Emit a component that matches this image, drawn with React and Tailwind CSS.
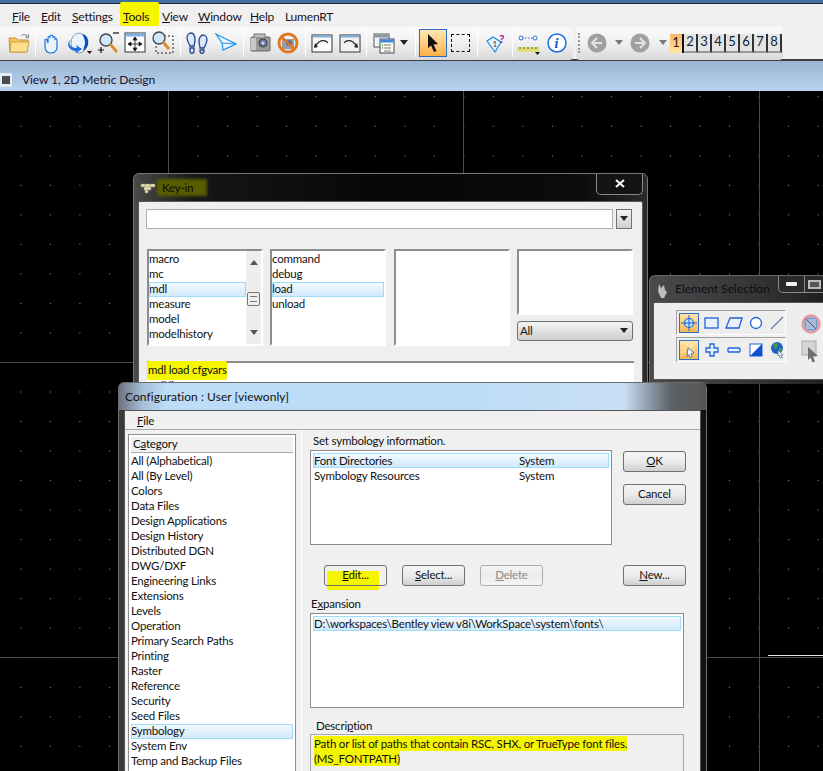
const menus = [
  ['F', 'ile', 'w-[29px]'],
  ['E', 'dit', 'w-[31px]'],
  ['S', 'ettings', 'w-[51px]'],
  ['T', 'ools', 'w-[39px]'],
  ['V', 'iew', 'w-[36px]'],
  ['W', 'indow', 'w-[52px]'],
  ['H', 'elp', 'w-[35px]'],
  ['', 'LumenRT', 'w-[60px]'],
]

const categories = [
  'All (Alphabetical)', 'All (By Level)', 'Colors', 'Data Files', 'Design Applications', 'Design History',
  'Distributed DGN', 'DWG/DXF', 'Engineering Links', 'Extensions', 'Levels', 'Operation', 'Primary Search Paths',
  'Printing', 'Raster', 'Reference', 'Security', 'Seed Files', 'Symbology', 'System Env', 'Temp and Backup Files',
]

function Sep({ className }) {
  return <span className={`h-[27px] w-px shrink-0 border-r border-[#fff] bg-[#a8a8a8] ${className}`} />
}

function Ico({ w = 22, h = 24, className = '', children }) {
  return (
    <svg width={w} height={h} viewBox={`0 0 ${w} ${h}`} className={`shrink-0 ${className}`}>
      {children}
    </svg>
  )
}

function Caret({ className, color = '#222' }) {
  return (
    <svg width="8" height="6" viewBox="0 0 8 6" className={`shrink-0 ${className}`}>
      <path d="M0 0h8L4 5z" fill={color} />
    </svg>
  )
}

function Grip({ className }) {
  return <span className={`h-[20px] w-[2px] shrink-0 border-l-2 border-dotted border-[#999] ${className}`} />
}

function ListRow({ children, active }) {
  return (
    <div className={`h-[15px] truncate leading-[14px] ${active ? 'outline outline-[#9fdcf8] -outline-offset-1 bg-linear-to-b from-[#f4faff] to-[#cfe8fb]' : ''}`}>
      {children}
    </div>
  )
}

function Btn({ children, className = '', disabled }) {
  return (
    <div className={`flex h-[21px] w-[63px] shrink-0 items-center justify-center rounded-[3px] border bg-linear-to-b from-[#f4f4f4] via-[#ececec] to-[#cfcfcf] pb-px ${disabled ? 'border-[#adadad] text-[#8a8a8a] from-[#f4f4f4] to-[#f4f4f4]' : 'border-[#707070] text-[#111]'} ${className}`}>
      <span className="relative">{children}</span>
    </div>
  )
}

function Bars() {
  return (
    <div className="absolute inset-x-0 top-[91px] bottom-0 bg-black">
      <svg width="823" height="680" className="absolute inset-0">
        <defs>
          <pattern id="dots" x="20.35" y="5.2" width="29.53" height="29.53" patternUnits="userSpaceOnUse">
            <rect width="1" height="1" fill="#9a9a9a" />
          </pattern>
        </defs>
        <rect width="823" height="680" fill="url(#dots)" />
        <path d="M168.5 0V680M463.5 0V680M759.5 0V680M0 271.5H823M0 566.5H823" stroke="#4a4a4a" />
        <path d="M768 564.5H823" stroke="#e8e8e8" />
      </svg>
    </div>
  )
}

function KeyIn() {
  return (
    <div className="absolute left-[133px] top-[173px] h-[240px] w-[515px] rounded-t-[6px] border border-[#777] bg-[linear-gradient(90deg,#4a4a4a_0%,#161616_12%,#060606_50%,#0c0c0c_88%,#2c2c2c_100%)]">
      <div className="flex h-[27px] items-center">
        <Ico w={16} h={12} className="ml-[6px]">
          <path d="M1 2h14v3H11v3H8v3H5V8H4V5H1z" fill="#e9e3b8" stroke="#8b8660" strokeWidth=".5" />
          <path d="M1 5h14M5 2v3M10 2v3M5 8h6" stroke="#8b8660" strokeWidth=".6" />
        </Ico>
        <span className="relative ml-[1px] flex h-[17px] w-[50px] items-center pl-[5px] text-[#0b0b0b]">
          <span className="absolute inset-0 bg-[#5a5c00] blur-[1.5px]" />
          <span className="relative">Key-in</span>
        </span>
        <div className="relative ml-auto mr-[4px] mt-[-7px] flex h-[21px] w-[47px] items-center justify-center rounded-b-[5px] border border-t-0 border-[#8a8a8a] bg-[#141414]">
          <svg width="10" height="9" viewBox="0 0 10 9">
            <path d="M1 1l8 7M9 1L1 8" stroke="#f2f2f2" strokeWidth="2.2" />
          </svg>
        </div>
      </div>
      <div className="mx-[4px] h-[300px] rounded-t-[2px] border border-[#5b5b5b] bg-[#efefef] pl-[7px] pt-[7px] text-[#111]">
        <div className="flex items-start">
          <div className="h-[20px] w-[467px] border border-[#abadb3] bg-white" />
          <div className="ml-[3px] flex h-[20px] w-[16px] items-center justify-center border border-[#707070] bg-linear-to-b from-[#f4f4f4] to-[#cfcfcf]">
            <Caret />
          </div>
        </div>
        <div className="mt-[20px] flex pl-px">
          <div className="flex h-[97px] w-[116px] border-2 border-b-[#fff] border-r-[#fff] border-l-[#8d8d8d] border-t-[#8d8d8d] bg-white">
            <div className="min-w-0 flex-1 pt-px">
              <ListRow>macro</ListRow>
              <ListRow>mc</ListRow>
              <ListRow active>mdl</ListRow>
              <ListRow>measure</ListRow>
              <ListRow>model</ListRow>
              <ListRow>modelhistory</ListRow>
            </div>
            <div className="relative w-[15px] bg-[#eeeeee]">
              <Caret color="#555" className="absolute left-[4px] top-[8px] rotate-180" />
              <div className="absolute left-px top-[41px] h-[14px] w-[13px] rounded-[2px] border border-[#777] bg-[#eeeeee] px-[2px] pt-[3px]">
                <div className="h-[6px] border-y border-[#777]" />
              </div>
              <Caret color="#555" className="absolute bottom-[8px] left-[4px]" />
            </div>
          </div>
          <div className="ml-[7px] h-[97px] w-[116px] border-2 border-b-[#fff] border-r-[#fff] border-l-[#8d8d8d] border-t-[#8d8d8d] bg-white pt-px">
            <ListRow>command</ListRow>
            <ListRow>debug</ListRow>
            <ListRow active>load</ListRow>
            <ListRow>unload</ListRow>
          </div>
          <div className="ml-[8px] h-[97px] w-[116px] border-2 border-b-[#fff] border-r-[#fff] border-l-[#8d8d8d] border-t-[#8d8d8d] bg-white" />
          <div className="ml-[7px] w-[116px]">
            <div className="h-[66px] border-2 border-b-[#fff] border-r-[#fff] border-l-[#8d8d8d] border-t-[#8d8d8d] bg-white" />
            <div className="mt-[6px] flex h-[20px] items-center justify-between rounded-[3px] border border-[#707070] bg-linear-to-b from-[#f4f4f4] to-[#cfcfcf] pl-[2px] pr-[4px]">
              All
              <Caret />
            </div>
          </div>
        </div>
        <div className="ml-px mt-[15px] h-[40px] w-[487px] border-t-2 border-t-[#8d8d8d] bg-white">
          <div className="relative h-[15px] w-[80px] whitespace-nowrap pl-px leading-[13px]">
            <span className="absolute inset-x-0 -top-[2px] h-[19px] rounded-[2px] bg-[#f5f500]" />
            <span className="relative">mdl load cfgvars</span>
          </div>
          <div className="relative h-[15px] pl-px leading-[15px]">mdl list</div>
        </div>
      </div>
    </div>
  )
}

function ElementSel() {
  return (
    <div className="absolute left-[649px] top-[275px] h-[109px] w-[190px] rounded-tl-[6px] border-l border-t border-[#666] bg-[linear-gradient(90deg,#4a4a4a_0%,#333_60%,#1a1a1a_100%)]">
      <div className="flex h-[26px] items-start">
        <Ico w={14} h={16} className="ml-[5px] mt-[7px]">
          <path d="M4 1l2 4 3-3 1 5 2 2-3 6H6L3 8z" fill="#bdbdbd" />
        </Ico>
        <span className="ml-[5px] mt-[5px] w-[103px] whitespace-nowrap rounded-[3px] px-[1px] text-[12px] leading-[16px] tracking-[0px] text-[#0c0c0c]">Element Selection</span>
        <div className="ml-[1px] flex h-[17px] w-[27px] items-center justify-center rounded-bl-[5px] border border-t-0 border-[#8a8a8a] bg-[#2a2a2a]">
          <span className="h-[4px] w-[11px] rounded-[1px] bg-[#eee]" />
        </div>
        <div className="flex h-[17px] w-[27px] items-center border-b border-[#8a8a8a] bg-[#2a2a2a] pl-[3px]">
          <span className="h-[9px] w-[13px] border-2 border-[#bbb] bg-[#555]" />
        </div>
      </div>
      <div className="ml-[3px] flex h-[78px] rounded-tl-[2px] border border-[#555] bg-[#eeeeee] pl-[22px] pt-[7px]">
        <div className="flex w-[110px] flex-col gap-[2px]">
          <div className="flex h-[25px] items-center border border-[#a0a0a0] border-r-white border-b-white pl-[2px]">
            <span className="flex h-[20px] w-[20px] items-center justify-center border border-[#2a6fc9] bg-linear-to-b from-[#ffe6a8] to-[#f9b650]">
              <Ico w={16} h={16}>
                <circle cx="8" cy="8" r="4.5" fill="#bfe0ff" stroke="#1c63d8" strokeWidth="1.2" />
                <path d="M8 0v16M0 8h16" stroke="#1c63d8" />
              </Ico>
            </span>
            <Ico w={18} h={16} className="ml-[4px]"><rect x="2" y="3" width="13" height="10" fill="#e8f1fd" stroke="#1c63d8" strokeWidth="1.3" /></Ico>
            <Ico w={18} h={16} className="ml-[4px]"><path d="M5 3h12l-3 10H1z" fill="#e8f1fd" stroke="#1c63d8" strokeWidth="1.3" /></Ico>
            <Ico w={16} h={16} className="ml-[5px]"><circle cx="8" cy="8" r="5.5" fill="#fff" stroke="#1c63d8" strokeWidth="1.3" /></Ico>
            <Ico w={16} h={16} className="ml-[5px]"><path d="M2 14L14 2" stroke="#6b7ea8" strokeWidth="1.2" /></Ico>
          </div>
          <div className="flex h-[25px] items-center border border-[#a0a0a0] border-r-white border-b-white pl-[2px]">
            <span className="flex h-[20px] w-[20px] items-center justify-center border border-[#2a6fc9] bg-linear-to-b from-[#ffe6a8] to-[#f9b650]">
              <Ico w={16} h={16}>
                <path d="M5 1l2 3M10 1L9 4M1 6l3 1M1 11l3-2M12 3l-2 2" stroke="#f7f3d0" strokeWidth="1.2" />
                <path d="M7 6l6 5-3 .5 1 3-2 1-1-3-2 2z" fill="#fff" stroke="#1c63d8" strokeWidth=".8" />
              </Ico>
            </span>
            <Ico w={16} h={16} className="ml-[5px]"><path d="M6 2h4v4h4v4h-4v4H6v-4H2V6h4z" fill="#e8f1fd" stroke="#1c63d8" strokeWidth="1.3" /></Ico>
            <Ico w={16} h={16} className="ml-[6px]"><rect x="2" y="6" width="12" height="4" rx="1" fill="#e8f1fd" stroke="#1c63d8" strokeWidth="1.3" /></Ico>
            <Ico w={16} h={16} className="ml-[6px]">
              <rect x="2" y="2" width="12" height="12" fill="#fff" stroke="#1c63d8" />
              <path d="M14 2v12H2z" fill="#0a4fd0" />
            </Ico>
            <Ico w={16} h={18} className="ml-[5px]">
              <circle cx="8" cy="7" r="6" fill="#1d63c7" />
              <path d="M4 3l4-1 1 3-3 3zM10 7l3 0-1 4-2-1z" fill="#4b9a3a" />
              <path d="M9 9l5 5-2 0 1 3-2 0-1-3-1 1z" fill="#e8eef7" stroke="#3a5f8f" strokeWidth=".6" />
            </Ico>
          </div>
        </div>
        <div className="ml-[15px] mt-[3px] flex flex-col">
          <Ico w={20} h={20} className="mt-[1px]">
            <rect x="4" y="4" width="12" height="12" fill="#a9bad9" stroke="#3b74c9" />
            <path d="M4 4l12 12" stroke="#556" />
            <circle cx="10" cy="10" r="8.5" fill="none" stroke="#e79a97" strokeWidth="2.4" />
          </Ico>
          <Ico w={20} h={24} className="mt-[6px]">
            <rect x="1" y="1" width="14" height="14" fill="#d5d5d5" stroke="#aaa" />
            <path d="M7 7l10 9-5 .5 2 5-2.5 1-2-5L7 20z" fill="#707070" />
          </Ico>
        </div>
      </div>
    </div>
  )
}

function Config() {
  return (
    <div className="absolute left-[118px] top-[382px] h-[420px] w-[589px] rounded-t-[6px] border border-b-0 border-[#6d6d6d] bg-linear-to-r from-[#3a3a3a] via-[#222] to-[#111]">
      <div className="flex h-[27px] items-center rounded-t-[5px] bg-[linear-gradient(90deg,#6a7480_0%,#a5bfd6_4%,#bcdcf8_8%,#bcdcf8_58%,#c8dff4_86%,#5c6268_94%,#555_100%)] pl-[6px] pt-px text-[12px] tracking-[.05px] text-[#111]">
        <span>Configuration : User [viewonly]</span>
      </div>
      <div className="mx-[5px] h-[390px] border border-[#555] bg-[#f0f0f0] text-[#111]">
        <div className="flex h-[19px] items-center border-b border-[#a9a9a9] pl-[12px] pt-[2px]">
          <span><u>F</u>ile</span>
        </div>
        <div className="flex">
          <div className="ml-[3px] mt-[4px] h-[360px] w-[168px] border border-[#8d8d8d] bg-white px-[2px] pt-[2px]">
            <div className="flex h-[16px] items-center border-b border-[#a9a9a9] bg-[#f0f0f0] pb-px pl-[2px]"><span>C<u>a</u>tegory</span></div>
            <div className="pt-px">
              {categories.map((c) => (
                <ListRow key={c} active={c === 'Symbology'}>{c}</ListRow>
              ))}
            </div>
          </div>
          <div className="ml-[5px] h-[370px] w-px border-r border-white bg-[#b5b5b5]" />
          <div className="ml-[8px] flex-1 pt-[3px]">
            <div className="ml-[3px] h-[16px] leading-[16px]">Set symbology information.</div>
            <div className="mt-px flex items-start">
              <div className="h-[95px] w-[302px] border border-[#8d8d8d] bg-white p-[2px]">
                <div className="flex h-[15px] items-center border border-[#9fdcf8] bg-linear-to-b from-[#f4faff] to-[#cfe8fb]">
                  <span className="w-[205px]">Font Directories</span>System
                </div>
                <div className="flex h-[15px] items-center pl-px">
                  <span className="w-[205px]">Symbology Resources</span>System
                </div>
              </div>
              <div className="ml-[11px] mt-px flex flex-col gap-[12px]">
                <Btn><u>O</u>K</Btn>
                <Btn>Cancel</Btn>
              </div>
            </div>
            <div className="mt-[20px] flex">
              <div className="relative ml-[14px]">
                <span className="absolute left-[3px] top-[6px] h-[19px] w-[52px] bg-[#f5f500]" />
                <Btn className="relative from-transparent via-transparent to-transparent"><u>E</u>dit...</Btn>
              </div>
              <Btn className="ml-[15px]"><u>S</u>elect...</Btn>
              <Btn disabled className="ml-[15px]"><u>D</u>elete</Btn>
              <Btn className="ml-[80px]"><u>N</u>ew...</Btn>
            </div>
            <div className="ml-px mt-[9px] h-[18px] leading-[18px]">E<u>x</u>pansion</div>
            <div className="h-[95px] w-[374px] border border-[#8d8d8d] bg-white p-[2px]">
              <div className="flex h-[15px] items-center whitespace-nowrap border border-[#9fdcf8] bg-linear-to-b from-[#f4faff] to-[#cfe8fb]">D:\workspaces\Bentley view v8i\WorkSpace\system\fonts\</div>
            </div>
            <div className="ml-[6px] mt-[9px] h-[17px] leading-[17px]">Descri<u>p</u>tion</div>
            <div className="h-[60px] w-[374px] border border-[#a8a8a8] pl-[3px] pt-px leading-[15px]">
              <span className="bg-[#f5f500] py-px">Path or list of paths that contain RSC, SHX, or TrueType font files.</span>
              <br />
              <span className="bg-[#f5f500] py-px">(MS_FONTPATH)</span>
            </div>
          </div>
        </div>
      </div>
    </div>
  )
}

export default function App() {
  return (
    <div className="relative h-[771px] w-[823px] overflow-hidden bg-black font-['Lato',sans-serif] text-[11.5px] tracking-[-.2px] text-[#111]">
      <Bars />
      <div className="relative">
        <div className="h-[3px] bg-[#3f6f9f]" />
        <div className="h-px bg-[#1b2b3a]" />
        <div className="flex h-[23px] items-center bg-[#f0f0f0] pl-[12px] pt-[3px] text-[12px]">
          {menus.map(([hot, rest, w]) => (
            <span key={rest} className={`relative shrink-0 ${w} text-[#1a1020]`}>
              {rest === 'ools' && <span className="absolute -left-[3px] right-[3px] -top-[6px] bottom-[0px] rounded-[2px] bg-[#f5f500]" />}
              <span className="relative"><u>{hot}</u>{rest}</span>
            </span>
          ))}
        </div>
        <div className="flex h-[34px] items-center border-b-2 border-[#3c3f43] bg-[#f0f0f0]">
          <div className="flex h-[33px] w-[573px] items-center rounded-r-[4px] bg-linear-to-b from-[#fafafa] via-[#f0f0f0] to-[#d9d9d9]">
            <Ico className="ml-[8px]">
              <path d="M1 7h7l2 2h10l-1 12H2z" fill="#f3c760" stroke="#c9953a" />
              <path d="M3 11h18l-2 10H2z" fill="#fbe08f" stroke="#d0a048" />
              <path d="M13 5c2-2 4-2 6 0l-1.500 1 3 1V3.500l-1 1" fill="none" stroke="#666" strokeWidth=".8" />
            </Ico>
            <Sep className="ml-[5px]" />
            <Ico w={18} className="ml-[6px]">
              <path d="M3 9v6c0 5 3 7 6 7s6-2 6-6V9c0-2-2-2-2 0V7c0-2-2-2-2 0V5.500c0-2-3-2-3 0V7C8 5 6 5 6 7v5L5 9c-1-1-2-1-2 0z" fill="#eaf4ff" stroke="#1873e0" strokeWidth="1.2" />
            </Ico>
            <Ico w={24} className="ml-[8px]">
              <ellipse cx="11" cy="12" rx="8" ry="10" fill="#e8f2fc" stroke="#8aa0ba" />
              <path d="M3 9c-4 4 0 8 6 8l-1-3 6 4-6 4v-2C1 20-3 12 3 9z" fill="#1a6fe0" />
              <path d="M14 3c5 1 7 5 6 11-1 3-3 5-5 6l1-4c2-4 1-8-2-13z" fill="#0f4fb5" />
              <path d="M19 20h5l-2.500 3z" fill="#111" />
            </Ico>
            <Ico className="ml-[5px]">
              <circle cx="9" cy="9" r="6" fill="#cfe6fb" stroke="#444" strokeWidth="1.4" />
              <path d="M13 13l7 8" stroke="#e08a30" strokeWidth="3" />
              <path d="M16 2h6" stroke="#111" strokeWidth="1.2" />
              <path d="M1 19h6M4 16v6" stroke="#111" strokeWidth="1.2" />
            </Ico>
            <Ico className="ml-[5px]">
              <rect x="1" y="2" width="20" height="19" fill="#fdfdfd" stroke="#333" />
              <rect x="1.500" y="2.500" width="19" height="3" fill="#7fb2e6" />
              <path d="M11 7v12M5 13h12M11 6l-2 3h4zM11 20l-2-3h4zM4 13l3-2v4zM18 13l-3-2v4z" fill="#111" stroke="#111" strokeWidth=".8" />
            </Ico>
            <Ico className="ml-[6px]">
              <rect x="4" y="5" width="17" height="17" fill="none" stroke="#222" strokeDasharray="2 2" />
              <circle cx="7" cy="7" r="6" fill="#cfe6fb" stroke="#444" strokeWidth="1.300" />
              <path d="M11 11l6 7" stroke="#e08a30" strokeWidth="3" />
            </Ico>
            <Sep className="ml-[6px]" />
            <Ico className="ml-[5px]">
              <path d="M5 2c3 0 4 3 4 7 0 3-1 5-1 6H4C3 12 1 10 1 7c0-3 2-5 4-5zM4 17h4v3c0 3-4 3-4 0z" fill="#dbe8fa" stroke="#26468f" strokeWidth="1.3" />
              <path d="M17 4c2 0 4 2 4 5 0 3-2 5-3 8h-4c0-2-1-4-1-7 0-3 2-6 4-6zM14 19h4v1c0 3-4 3-4 0z" fill="#dbe8fa" stroke="#26468f" strokeWidth="1.300" />
            </Ico>
            <Ico className="ml-[7px]">
              <path d="M1 3l20 10-13 6-1-7zM7 12l14 1" fill="#e9f4fe" stroke="#1f95e8" strokeWidth="1.2" />
            </Ico>
            <Sep className="ml-[6px]" />
            <Ico w={21} className="ml-[6px]">
              <rect x="1" y="6" width="19" height="14" rx="1" fill="#9a9a9a" stroke="#666" />
              <rect x="4" y="3" width="11" height="4" fill="#bdbdbd" stroke="#777" />
              <rect x="1" y="7" width="5" height="12" fill="#c9c9c9" />
              <circle cx="13" cy="12" r="4" fill="#6b78a0" stroke="#3c3c3c" />
              <circle cx="13" cy="12" r="1.500" fill="#cfd7f0" />
            </Ico>
            <Ico className="ml-[6px]">
              <rect x="5" y="8" width="12" height="10" fill="#9a9aa5" />
              <circle cx="12" cy="12" r="3" fill="#5d6d9a" />
              <circle cx="11" cy="12" r="9" fill="none" stroke="#de7b22" strokeWidth="3" />
              <path d="M5 6l12 12" stroke="#de7b22" strokeWidth="2.400" />
            </Ico>
            <Sep className="ml-[6px]" />
            <Ico className="ml-[5px]">
              <rect x="1" y="4" width="20" height="17" fill="#fafafa" stroke="#333" />
              <rect x="1.500" y="4.500" width="19" height="2" fill="#7fb2e6" />
              <path d="M17 12c-2-3-6-3-9-1L4 15" fill="none" stroke="#222" strokeWidth="1.100" />
              <path d="M3 17l1-5 3 4z" fill="#222" />
            </Ico>
            <Ico className="ml-[6px]">
              <rect x="1" y="4" width="20" height="17" fill="#f2f2f2" stroke="#333" />
              <rect x="1.500" y="4.500" width="19" height="2" fill="#7fb2e6" />
              <path d="M5 12c2-3 6-3 9-1l4 4" fill="none" stroke="#222" strokeWidth="1.100" />
              <path d="M19 17l-1-5-3 4z" fill="#222" />
            </Ico>
            <Sep className="ml-[5px]" />
            <Ico className="ml-[6px]">
              <rect x="1" y="3" width="15" height="13" fill="#f0f4fa" stroke="#555" />
              <rect x="1.500" y="3.500" width="14" height="3" fill="#8a96a8" />
              <rect x="7" y="8" width="14" height="14" fill="#fdfdf0" stroke="#446" />
              <rect x="7.500" y="8.500" width="13" height="3" fill="#3f86d6" />
              <path d="M11 14h7M11 17h7M11 20h7" stroke="#777" />
              <path d="M9 14h1M9 17h1" stroke="#2a9d3a" strokeWidth="1.500" />
            </Ico>
            <Caret className="ml-[5px]" />
            <Sep className="ml-[7px]" />
            <div className="ml-[3px] flex h-[28px] w-[28px] items-center justify-center border border-[#2e6cc4] bg-linear-to-b from-[#ffe7b0] to-[#fdb044]">
              <svg width="14" height="20" viewBox="0 0 14 20"><path d="M2 1l10 10-4.500.5 3 6.500-2.500 1-3-6.500L2 15z" fill="#111" /></svg>
            </div>
            <span className="ml-[4px] h-[18px] w-[19px] border border-dashed border-[#111]" />
            <Sep className="ml-[7px]" />
            <Ico w={20} className="ml-[8px]">
              <path d="M1 10l6-4 8 5-6 10z" fill="#e8f3ff" stroke="#2386e0" strokeWidth="1.2" />
              <text x="6.500" y="16" fontSize="8" fill="#333">1</text>
              <text x="13" y="12" fontSize="12" fontWeight="bold" fill="#b3149c">?</text>
            </Ico>
            <Sep className="ml-[6px]" />
            <Ico w={23} className="ml-[4px]">
              <path d="M5 7h12" stroke="#2a6fd8" strokeDasharray="1.500 1.500" />
              <circle cx="4" cy="7" r="2" fill="#fff" stroke="#2a6fd8" />
              <circle cx="18" cy="7" r="2" fill="#fff" stroke="#2a6fd8" />
              <rect x="0" y="16" width="22" height="5" fill="#e3dc7a" />
              <path d="M3 16v2M7 16v2M11 16v2M15 16v2M19 16v2" stroke="#555" />
              <path d="M18 21h5l-2.500 3z" fill="#111" />
            </Ico>
            <Ico w={20} className="ml-[7px]">
              <circle cx="10" cy="12" r="9" fill="#fdfeff" stroke="#1f6fe0" strokeWidth="1.500" />
              <text x="7.500" y="17" fontSize="14" fontWeight="bold" fontStyle="italic" fontFamily="Liberation Serif, serif" fill="#1450c8">i</text>
            </Ico>
          </div>
          <div className="ml-[3px] flex h-[33px] w-[207px] items-center rounded-[4px] bg-linear-to-b from-[#fafafa] via-[#f0f0f0] to-[#d9d9d9]">
            <Grip className="ml-[2px]" />
            <Ico w={20} className="ml-[7px]">
              <circle cx="10" cy="12" r="9.500" fill="#a0a0a0" />
              <path d="M15 12H6M10 7l-5 5 5 5" fill="none" stroke="#e4e4e4" strokeWidth="2" />
            </Ico>
            <Caret className="ml-[8px]" color="#777" />
            <Ico w={20} className="ml-[7px]">
              <circle cx="10" cy="12" r="9.500" fill="#a0a0a0" />
              <path d="M5 12h9M10 7l5 5-5 5" fill="none" stroke="#e4e4e4" strokeWidth="2" />
            </Ico>
            <Caret className="ml-[9px]" color="#777" />
            <div className="ml-[3px] flex">
              {[1, 2, 3, 4, 5, 6, 7, 8].map((n) => (
                <span
                  key={n}
                  className={`flex h-[19px] w-[14px] items-center justify-center border-r-2 text-[13px] ${n === 1 ? 'border-[#111] bg-linear-to-b from-[#f7b66a] to-[#ffe89c] text-[#3c0e10]' : 'border-[#333] border-b-2 border-b-[#9a9a9a] bg-[#e4e4e4] text-[#0c2340]'}`}
                >
                  {n}
                </span>
              ))}
            </div>
          </div>
        </div>
        <div className="flex h-[30px] items-center bg-linear-to-b from-[#9ab5d3] to-[#b9d3ee] pt-[7px]">
          <span className="flex h-[14px] w-[12px] items-center justify-center bg-[#e3edf7]">
            <span className="h-[8px] w-[8px] bg-[#4d4d4d]" />
          </span>
          <span className="ml-[10px] text-[12px] tracking-[-.1px] text-[#1a1030]">View 1, 2D Metric Design</span>
        </div>
      </div>
      <KeyIn />
      <ElementSel />
      <Config />
    </div>
  )
}
